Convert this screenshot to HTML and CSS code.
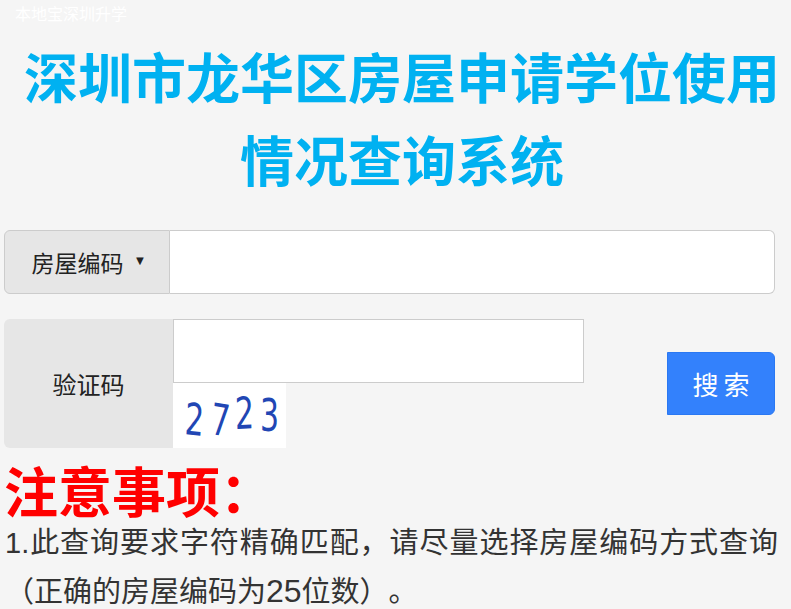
FILE: index.html
```html
<!DOCTYPE html>
<html lang="zh-CN">
<head>
<meta charset="utf-8">
<title>深圳市龙华区房屋申请学位使用情况查询系统</title>
<link rel="stylesheet" href="styles.css">
</head>
<body>
<div class="page">
  <div class="brand">本地宝深圳升学</div>
  <h1 class="title">深圳市龙华区房屋申请学位使用情况查询系统</h1>
  <form class="form">
    <div class="row row-main">
      <div class="addon addon-select">房屋编码<span class="caret">▼</span></div>
      <input class="field field-main" type="text">
    </div>
    <div class="row row-code">
      <div class="addon addon-label">验证码</div>
      <div class="code-col">
        <input class="field field-code" type="text">
        <div class="captcha"><span class="d d1">2</span><span class="d d2">7</span><span class="d d3">2</span><span class="d d4">3</span></div>
      </div>
      <button class="btn" type="button">搜 索</button>
    </div>
  </form>
  <h2 class="notice">注意事项：</h2>
  <p class="note">1.此查询要求字符精确匹配，请尽量选择房屋编码方式查询（正确的房屋编码为<span class="num">25</span>位数）。</p>
</div>
</body>
</html>
```
FILE: styles.css
```css
html, body {
  margin: 0;
  padding: 0;
  background: #f5f5f5;
}
body {
  font-family: "Liberation Sans", "Noto Sans CJK SC", sans-serif;
  color: #333;
  text-spacing-trim: space-all;
}
.page {
  width: 791px;
}
.brand {
  color: #ffffff;
  font-size: 16px;
  line-height: 30px;
  padding-left: 15px;
}
.title {
  margin: 9px 0 0 0;
  padding-left: 13px;
  font-size: 54px;
  line-height: 83px;
  font-weight: bold;
  color: #00b1f1;
  text-align: center;
}
.form {
  margin: 25px 0 0 4px;
  width: 771px;
}
.row {
  display: flex;
}
.row-main {
  height: 64px;
}
.addon {
  box-sizing: border-box;
  background: #e6e6e6;
  color: #222;
  display: flex;
  align-items: center;
  justify-content: center;
}
.addon-select {
  width: 166px;
  border: 1px solid #cccccc;
  border-radius: 6px 0 0 6px;
  font-size: 23px;
  padding-left: 4px;
}
.caret {
  font-size: 13px;
  margin-left: 10px;
  position: relative;
  top: -2px;
}
.field {
  box-sizing: border-box;
  border: 1px solid #cccccc;
  background: #ffffff;
  margin: 0;
  padding: 0 12px;
  outline: none;
  font-size: 20px;
}
.field-main {
  flex: 1;
  height: 64px;
  border-left: 0;
  border-radius: 0 6px 6px 0;
}
.row-code {
  margin-top: 25px;
  height: 129px;
  align-items: stretch;
}
.addon-label {
  width: 169px;
  border-radius: 6px 0 0 6px;
  font-size: 24px;
}
.code-col {
  display: flex;
  flex-direction: column;
  width: 411px;
}
.field-code {
  width: 411px;
  height: 64px;
}
.captcha {
  width: 113px;
  height: 65px;
  background: #ffffff;
  display: flex;
  align-items: center;
  padding-left: 12px;
  box-sizing: border-box;
  gap: 6px;
}
.d {
  display: inline-block;
  font-family: "DejaVu Sans", sans-serif;
  font-size: 44px;
  line-height: 44px;
  color: #2146b4;
  transform-origin: left center;
  width: 18px;
  position: relative;
}
.d1 { transform: scaleX(0.68) rotate(4deg); top: 3px; }
.d2 { transform: scaleX(0.68) rotate(6deg); top: 3px; left: 2px; }
.d3 { transform: scaleX(0.68) rotate(-2deg); top: -2px; left: 2px; }
.d4 { transform: scaleX(0.68); top: 0; left: 3px; }
.btn {
  margin-left: auto;
  align-self: center;
  width: 108px;
  height: 63px;
  box-sizing: border-box;
  background: #3381fc;
  border: 1px solid #2a78f2;
  border-radius: 0 6px 6px 0;
  color: #ffffff;
  font-family: "Liberation Sans", "Noto Sans CJK SC", sans-serif;
  font-size: 26px;
  padding: 0;
  word-spacing: -2px;
}
.notice {
  margin: 21px 0 0 4px;
  font-size: 54px;
  line-height: 50px;
  font-weight: bold;
  color: #ff0000;
}
.note {
  margin: 0 0 0 5px;
  width: 773px;
  font-size: 29px;
  line-height: 48px;
  text-align: justify;
  color: #333;
}
.num {
  font-size: 32px;
}
```
